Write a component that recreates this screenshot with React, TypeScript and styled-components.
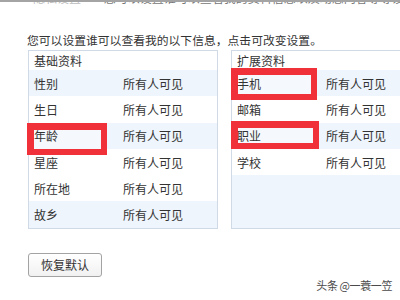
import React from "react";
import styled, { createGlobalStyle } from "styled-components";

const Global = createGlobalStyle`
  html, body { margin: 0; padding: 0; background: #fff; overflow: hidden; }
  body { font-family: "Noto Sans CJK SC", "Noto Sans", sans-serif; color: #333; }
`;

const Page = styled.div`
  position: relative;
  width: 400px;
  height: 300px;
  overflow: hidden;
  background: #fff;
`;

const TopStrip = styled.div`
  height: 3px;
  overflow: hidden;
  border-top: 2px solid #a4a4a4;
  padding-left: 33px;
  font-size: 12px;
  line-height: 12px;
  color: #bbb;
  white-space: nowrap;
`;

const TopText = styled.div`
  margin-top: -10px;
  span { color: #777; margin-left: 20px; }
`;

const Content = styled.div`
  padding: 26px 0 0 27px;
`;

const Title = styled.div`
  font-size: 11.8px;
  line-height: 18px;
  height: 18px;
  white-space: nowrap;
  color: #333;
`;

const Panels = styled.div`
  display: flex;
  gap: 13px;
  margin-top: 1px;
  margin-left: 1px;
  width: 420px;
  align-items: stretch;
`;

const Panel = styled.div`
  width: 188px;
  border: 1px solid #cfdae6;
  display: flex;
  flex-direction: column;
  background: #fff;
`;

const Header = styled.div`
  height: 19px;
  line-height: 19px;
  padding-left: 5px;
  font-size: 12px;
  background: #fff;
`;

const Row = styled.div<{ $alt?: boolean }>`
  position: relative;
  height: 26.3px;
  display: flex;
  align-items: center;
  font-size: 12px;
  background: ${(p) => (p.$alt ? "#eef5fc" : "#fff")};
`;

const Filler = styled.div`
  flex: 1;
  background: #eef5fc;
`;

const Label = styled.span`
  position: relative;
  z-index: 3;
  width: 89px;
  padding-left: 5px;
`;

const Value = styled.span`
  position: relative;
  z-index: 3;
`;

const Highlight = styled.div`
  position: absolute;
  box-sizing: border-box;
  border-style: solid;
  border-color: #f0313a;
  border-width: 7px 6px 6px 7px;
  background: #f5f9fd;
  z-index: 2;
`;

const Button = styled.button`
  margin-top: 24px;
  margin-left: 1px;
  width: 74px;
  height: 24px;
  border: 1px solid #a3a3a3;
  border-radius: 3px;
  background: linear-gradient(#ffffff, #f1f1f1);
  font-family: "Noto Sans CJK SC", sans-serif;
  font-size: 12px;
  color: #333;
  padding: 0;
`;

const Watermark = styled.div`
  position: absolute;
  right: 8px;
  bottom: 7px;
  font-size: 11px;
  color: #4a4a4a;
  text-shadow: 0 0 2px #fff, 0 0 1px #fff;
  letter-spacing: -0.4px;
`;

type Item = { label: string; alt: boolean; box?: { l: number; t: number; w: number; h: number } };

const basic: Item[] = [
  { label: "性别", alt: true },
  { label: "生日", alt: false },
  { label: "年龄", alt: true, box: { l: -2, t: 0, w: 80, h: 32 } },
  { label: "星座", alt: false },
  { label: "所在地", alt: false },
  { label: "故乡", alt: true },
];

const extended: Item[] = [
  { label: "手机", alt: true, box: { l: -1, t: -2, w: 86, h: 32 } },
  { label: "邮箱", alt: false },
  { label: "职业", alt: true, box: { l: -1, t: -2, w: 88, h: 28 } },
  { label: "学校", alt: false },
];

function Rows({ items }: { items: Item[] }) {
  return (
    <>
      {items.map((it) => (
        <Row key={it.label} $alt={it.alt}>
          {it.box && (
            <Highlight
              style={{ left: it.box.l, top: it.box.t, width: it.box.w, height: it.box.h }}
            />
          )}
          <Label>{it.label}</Label>
          <Value>所有人可见</Value>
        </Row>
      ))}
    </>
  );
}

export default function App() {
  return (
    <Page>
      <Global />
      <TopStrip>
        <TopText>
          隐私设置 <span>您可以设置谁可以查看我的资料信息以及动态内容等等设置</span>
        </TopText>
      </TopStrip>
      <Content>
        <Title>您可以设置谁可以查看我的以下信息，点击可改变设置。</Title>
        <Panels>
          <Panel>
            <Header>基础资料</Header>
            <Rows items={basic} />
          </Panel>
          <Panel>
            <Header>扩展资料</Header>
            <Rows items={extended} />
            <Filler />
          </Panel>
        </Panels>
        <Button>恢复默认</Button>
      </Content>
      <Watermark>头条 @一蓑一笠</Watermark>
    </Page>
  );
}
